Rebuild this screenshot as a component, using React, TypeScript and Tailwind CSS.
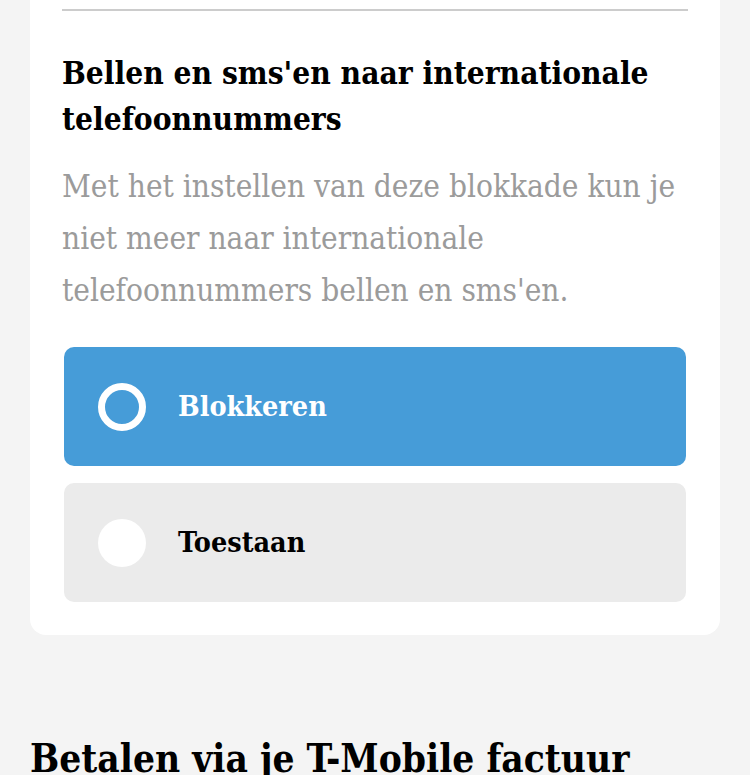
const options = [
  { label: "Blokkeren", selected: true },
  { label: "Toestaan", selected: false },
];

function Radio({ selected }: { selected: boolean }) {
  return selected ? (
    <span className="w-[48px] h-[48px] rounded-full border-[7px] border-white shrink-0" />
  ) : (
    <span className="w-[48px] h-[48px] rounded-full bg-white shrink-0" />
  );
}

export default function App() {
  return (
    <div className="min-h-screen bg-[#f4f4f4] px-[30px] overflow-hidden font-['DejaVu_Serif',serif] font-stretch-condensed">
      <section className="bg-white rounded-b-[16px] px-[32px] pt-[9px] pb-[33px]">
        <div className="h-[2px] bg-[#cccccc]" />
        <h2 className="mt-[39px] text-[31.4px] leading-[46px] font-bold text-black">
          Bellen en sms'en naar internationale telefoonnummers
        </h2>
        <p className="mt-[18px] text-[31.3px] leading-[52px] text-[#9b9b9b]">
          Met het instellen van deze blokkade kun je niet meer naar internationale telefoonnummers bellen en sms'en.
        </p>
        <div className="mt-[31px] mx-[2px] flex flex-col gap-[17px]">
          {options.map((o) => (
            <button
              key={o.label}
              className={`h-[119px] rounded-[10px] flex items-center gap-[32px] px-[34px] text-left ${
                o.selected ? "bg-[#469cd8] text-white" : "bg-[#ebebeb] text-black"
              }`}
            >
              <Radio selected={o.selected} />
              <span className="text-[28.5px] font-bold">{o.label}</span>
            </button>
          ))}
        </div>
      </section>
      <h2 className="mt-[98px] text-[38.5px] leading-[52px] font-bold text-black">
        Betalen via je T-Mobile factuur
      </h2>
    </div>
  );
}
